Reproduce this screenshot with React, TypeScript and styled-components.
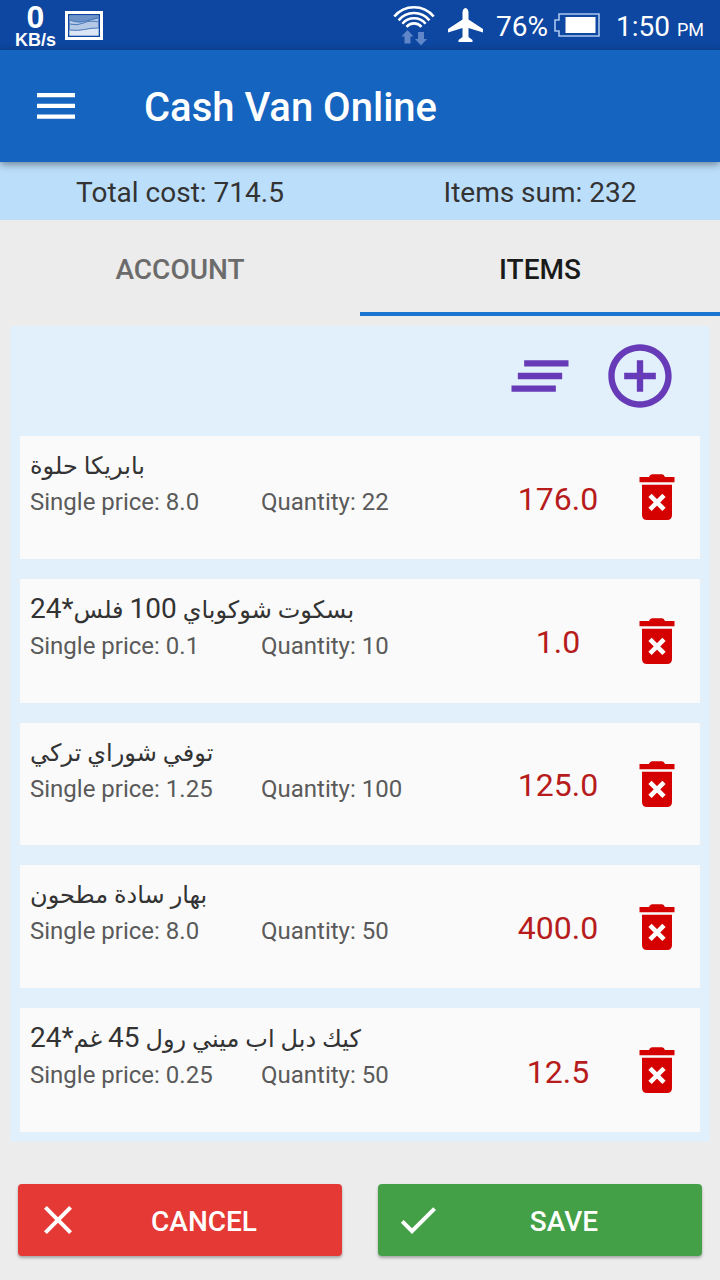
import React from "react";
import styled, { createGlobalStyle } from "styled-components";

const GlobalStyle = createGlobalStyle`
  *, *::before, *::after { box-sizing: border-box; }
  body {
    margin: 0;
    background: #ececec;
    font-family: Roboto, "Noto Sans", "DejaVu Sans", sans-serif;
    color: #333;
  }
  button {
    margin: 0;
    padding: 0;
    border: 0;
    background: none;
    font: inherit;
    color: inherit;
    cursor: pointer;
  }
`;

const Screen = styled.div`
  display: flex;
  flex-direction: column;
  min-height: 100vh;
`;

const StatusBar = styled.div`
  display: flex;
  align-items: center;
  justify-content: space-between;
  height: 50px;
  padding: 0 16px 0 15px;
  background: #0d47a1;
  color: #fff;
  font-size: 28px;
  line-height: 32px;
`;

const StatusGroup = styled.div<{ $gap: number }>`
  display: flex;
  align-items: center;
  gap: ${(p) => p.$gap}px;
`;

const Speed = styled.div`
  display: flex;
  flex-direction: column;
  align-items: center;
  padding-top: 2px;
  font-family: "Liberation Sans", Arial, sans-serif;
  font-weight: 700;
`;

const SpeedValue = styled.span`
  font-size: 32px;
  line-height: 28px;
`;

const SpeedUnit = styled.span`
  font-size: 18px;
  line-height: 18px;
`;

const BatteryLevel = styled.div`
  display: flex;
  align-items: center;
  gap: 6px;
`;

const BatteryText = styled.span`
  padding-top: 4px;
`;

const Clock = styled.time`
  display: flex;
  align-items: baseline;
  gap: 7px;
  margin-left: 3px;
  padding-top: 6px;
`;

const Meridiem = styled.span`
  font-size: 18px;
`;

const AppBar = styled.header`
  position: relative;
  z-index: 1;
  display: flex;
  align-items: center;
  gap: 69px;
  height: 112px;
  padding: 0 37px;
  background: #1564c0;
  color: #fff;
  box-shadow: 0 2px 8px rgba(0, 0, 0, 0.45);
`;

const MenuButton = styled.button`
  display: flex;
`;

const Title = styled.h1`
  margin: 0;
  padding-top: 4px;
  font-size: 40px;
  line-height: 48px;
  font-weight: 500;
`;

const Summary = styled.div`
  display: flex;
  height: 58px;
  padding-top: 4px;
  background: #bbdefb;
`;

const SummaryCell = styled.div`
  flex: 1;
  display: flex;
  align-items: center;
  justify-content: center;
  font-size: 28px;
  line-height: 32px;
`;

const Tabs = styled.div`
  display: flex;
  height: 96px;
`;

const Tab = styled.button<{ $active?: boolean }>`
  flex: 1;
  padding-top: 8px;
  border-bottom: 4px solid ${(p) => (p.$active ? "#1976d2" : "transparent")};
  color: ${(p) => (p.$active ? "#1a1a1a" : "#6b6b6b")};
  font-size: 28px;
  line-height: 32px;
  font-weight: 500;
`;

const Panel = styled.main`
  flex: 1;
  display: flex;
  flex-direction: column;
  margin: 10px 10px 0;
  padding: 0 10px 10px;
  border-radius: 4px;
  background: #e2f0fb;
`;

const Toolbar = styled.div`
  display: flex;
  justify-content: flex-end;
  padding: 0 10px 10px;
`;

const ToolButton = styled.button`
  display: flex;
  align-items: center;
  justify-content: center;
  width: 100px;
  height: 100px;
  color: #673ab7;
`;

const List = styled.ul`
  flex: 1;
  display: flex;
  flex-direction: column;
  gap: 20px;
  margin: 0;
  padding: 0;
  list-style: none;
`;

const Card = styled.li`
  flex: 1;
  display: flex;
  align-items: center;
  min-height: 120px;
  padding: 0 10px;
  background: #fafafa;
`;

const Details = styled.div`
  flex: 1;
  align-self: flex-start;
  padding-top: 12px;
`;

const ItemName = styled.div`
  padding-bottom: 2px;
  text-align: left;
  font-size: 24px;
  line-height: 36px;
`;

const Numeral = styled.span`
  font-size: 28px;
`;

const Meta = styled.div`
  display: grid;
  grid-template-columns: 1fr 1fr;
  color: #5a5a5a;
  font-size: 24px;
  line-height: 32px;
`;

const Amount = styled.div`
  width: 132px;
  padding-top: 3px;
  text-align: center;
  color: #b71c1c;
  font-size: 32px;
  line-height: 40px;
`;

const DeleteButton = styled.button`
  display: flex;
  justify-content: center;
  width: 66px;
  color: #d50000;
`;

const Footer = styled.footer`
  display: grid;
  grid-template-columns: 1fr 1fr;
  gap: 36px;
  padding: 42px 18px 24px;
`;

const ActionButton = styled.button<{ $color: string }>`
  display: flex;
  align-items: center;
  height: 72px;
  padding: 0 16px;
  border-radius: 4px;
  background: ${(p) => p.$color};
  color: #fff;
  font-size: 28px;
  line-height: 32px;
  font-weight: 500;
  box-shadow: 0 2px 3px rgba(0, 0, 0, 0.3);
`;

const ActionLabel = styled.span`
  flex: 1;
  padding-top: 3px;
  text-align: center;
`;

const PictureIcon = () => (
  <svg width="38" height="29" viewBox="0 0 38 29" aria-hidden="true">
    <rect width="38" height="29" fill="#fff" />
    <rect x="3" y="3" width="32" height="23" fill="#0d47a1" />
    <rect x="4.500" y="4.500" width="29" height="20" fill="#b3c9e6" />
    <path d="M4.500 4.500h29v3q-8 2-15 3.500t-14-2z" fill="#6d93c8" />
    <path d="M4.500 19q9 1 15-.5t14-1.500v7.500h-29z" fill="#dbe7f5" />
    <path
      d="M4.500 9q7 3 14 1.500t15-4M4.500 13q8 2 14-1t15-1M4.500 19q9 1 15-.5t14-1.500"
      fill="none"
      stroke="#4a78b8"
      strokeWidth="1"
    />
  </svg>
);

const WifiIcon = () => (
  <svg width="42" height="42" viewBox="0 0 42 42" fill="none" aria-hidden="true">
    <g stroke="#fff" strokeWidth="2.600">
      <path d="M1.300 12.500A25.500 25.500 0 0 1 40.700 12.500" />
      <path d="M5.600 16.300A20 20 0 0 1 36.400 16.300" />
      <path d="M9.400 19.700A15 15 0 0 1 32.600 19.700" />
      <path d="M13.500 22.800A10 10 0 0 1 28.500 22.800" />
    </g>
    <path
      d="M14.500 26l6 6.500h-3v7h-6v-7h-3zM28 41.500l-6-6.500h3v-7h6v7h3z"
      fill="#5f86c9"
    />
  </svg>
);

const AirplaneIcon = () => (
  <svg width="35" height="34" viewBox="0 0 35 34" fill="#fff" aria-hidden="true">
    <path d="M17.500 0C19.400 0 20.500 2.500 20.500 4.500V11.500L35 21V24.500L20.500 20V29L24.500 32V34H10.500V32L14.500 29V20L0 24.500V21L14.500 11.500V4.500C14.500 2.500 15.600 0 17.500 0Z" />
  </svg>
);

const BatteryIcon = () => (
  <svg width="46" height="24" viewBox="0 0 46 24" aria-hidden="true">
    <path
      d="M5 1H45V23H5V18H1V7H5Z"
      fill="none"
      stroke="#a9c6ee"
      strokeWidth="1.600"
    />
    <rect x="11.500" y="4" width="30" height="16" fill="#fff" />
  </svg>
);

const MenuIcon = () => (
  <svg width="38" height="26" viewBox="0 0 38 26" fill="#fff" aria-hidden="true">
    <path d="M0 0h38v4.300H0zM0 10.800h38v4.300H0zM0 21.500h38v4.300H0z" />
  </svg>
);

const MaterialIcon = ({ size, d }: { size: number; d: string }) => (
  <svg width={size} height={size} viewBox="0 0 24 24" fill="currentColor" aria-hidden="true">
    <path d={d} />
  </svg>
);

const CLEAR_ALL = "M5 13h14v-2H5v2zm-2 4h14v-2H3v2zM7 7v2h14V7H7z";
const ADD_CIRCLE =
  "M13 7h-2v4H7v2h4v4h2v-4h4v-2h-4V7zm-1-5C6.480 2 2 6.480 2 12s4.480 10 10 10 10-4.480 10-10S17.520 2 12 2zm0 18c-4.410 0-8-3.590-8-8s3.590-8 8-8 8 3.590 8 8-3.590 8-8 8z";
const CLOSE =
  "M19 6.410L17.590 5 12 10.590 6.410 5 5 6.410 10.590 12 5 17.590 6.410 19 12 13.410 17.590 19 19 17.590 13.410 12z";
const CHECK = "M9 16.170L4.830 12l-1.420 1.410L9 19 21 7l-1.410-1.410z";

const TrashIcon = () => (
  <svg width="36" height="46" viewBox="0 0 36 46" aria-hidden="true">
    <path
      d="M.5 3H10Q11 .3 13 .3H23Q25 .3 26 3H35.500V8.300H.5ZM3 10.700H33V41Q33 46 28 46H8Q3 46 3 41Z"
      fill="currentColor"
    />
    <path d="M11 21.300L25 35.300M25 21.300L11 35.300" stroke="#fff" strokeWidth="4.600" />
  </svg>
);

interface Item {
  name: string;
  price: string;
  quantity: number;
  total: string;
}

const ITEMS: Item[] = [
  { name: "بابريكا حلوة", price: "8.0", quantity: 22, total: "176.0" },
  { name: "بسكوت شوكوباي 100 فلس*24", price: "0.1", quantity: 10, total: "1.0" },
  { name: "توفي شوراي تركي", price: "1.25", quantity: 100, total: "125.0" },
  { name: "بهار سادة مطحون", price: "8.0", quantity: 50, total: "400.0" },
  { name: "كيك دبل اب ميني رول 45 غم*24", price: "0.25", quantity: 50, total: "12.5" },
];

/* Digits are set larger than the Arabic letters so both look the same height. */
const renderName = (name: string) =>
  name
    .split(/([*\d]+)/)
    .map((part, i) => (i % 2 ? <Numeral key={i}>{part}</Numeral> : part));

const ItemCard = ({ item }: { item: Item }) => (
  <Card>
    <Details>
      <ItemName dir="rtl" lang="ar">
        {renderName(item.name)}
      </ItemName>
      <Meta>
        <span>Single price: {item.price}</span>
        <span>Quantity: {item.quantity}</span>
      </Meta>
    </Details>
    <Amount>{item.total}</Amount>
    <DeleteButton type="button" aria-label="Delete item">
      <TrashIcon />
    </DeleteButton>
  </Card>
);

export default function App() {
  return (
    <>
      <GlobalStyle />
      <Screen>
        <StatusBar>
          <StatusGroup $gap={9}>
            <Speed>
              <SpeedValue>0</SpeedValue>
              <SpeedUnit>KB/s</SpeedUnit>
            </Speed>
            <PictureIcon />
          </StatusGroup>
          <StatusGroup $gap={13}>
            <WifiIcon />
            <AirplaneIcon />
            <BatteryLevel>
              <BatteryText>76%</BatteryText>
              <BatteryIcon />
            </BatteryLevel>
            <Clock>
              1:50 <Meridiem>PM</Meridiem>
            </Clock>
          </StatusGroup>
        </StatusBar>
        <AppBar>
          <MenuButton type="button" aria-label="Menu">
            <MenuIcon />
          </MenuButton>
          <Title>Cash Van Online</Title>
        </AppBar>
        <Summary>
          <SummaryCell>Total cost: 714.5</SummaryCell>
          <SummaryCell>Items sum: 232</SummaryCell>
        </Summary>
        <Tabs role="tablist">
          <Tab type="button" role="tab" aria-selected={false}>
            ACCOUNT
          </Tab>
          <Tab type="button" role="tab" aria-selected $active>
            ITEMS
          </Tab>
        </Tabs>
        <Panel>
          <Toolbar>
            <ToolButton type="button" aria-label="Clear all">
              <MaterialIcon size={76} d={CLEAR_ALL} />
            </ToolButton>
            <ToolButton type="button" aria-label="Add item">
              <MaterialIcon size={76} d={ADD_CIRCLE} />
            </ToolButton>
          </Toolbar>
          <List>
            {ITEMS.map((item) => (
              <ItemCard key={item.name} item={item} />
            ))}
          </List>
        </Panel>
        <Footer>
          <ActionButton type="button" $color="#e53935">
            <MaterialIcon size={48} d={CLOSE} />
            <ActionLabel>CANCEL</ActionLabel>
          </ActionButton>
          <ActionButton type="button" $color="#43a047">
            <MaterialIcon size={48} d={CHECK} />
            <ActionLabel>SAVE</ActionLabel>
          </ActionButton>
        </Footer>
      </Screen>
    </>
  );
}
